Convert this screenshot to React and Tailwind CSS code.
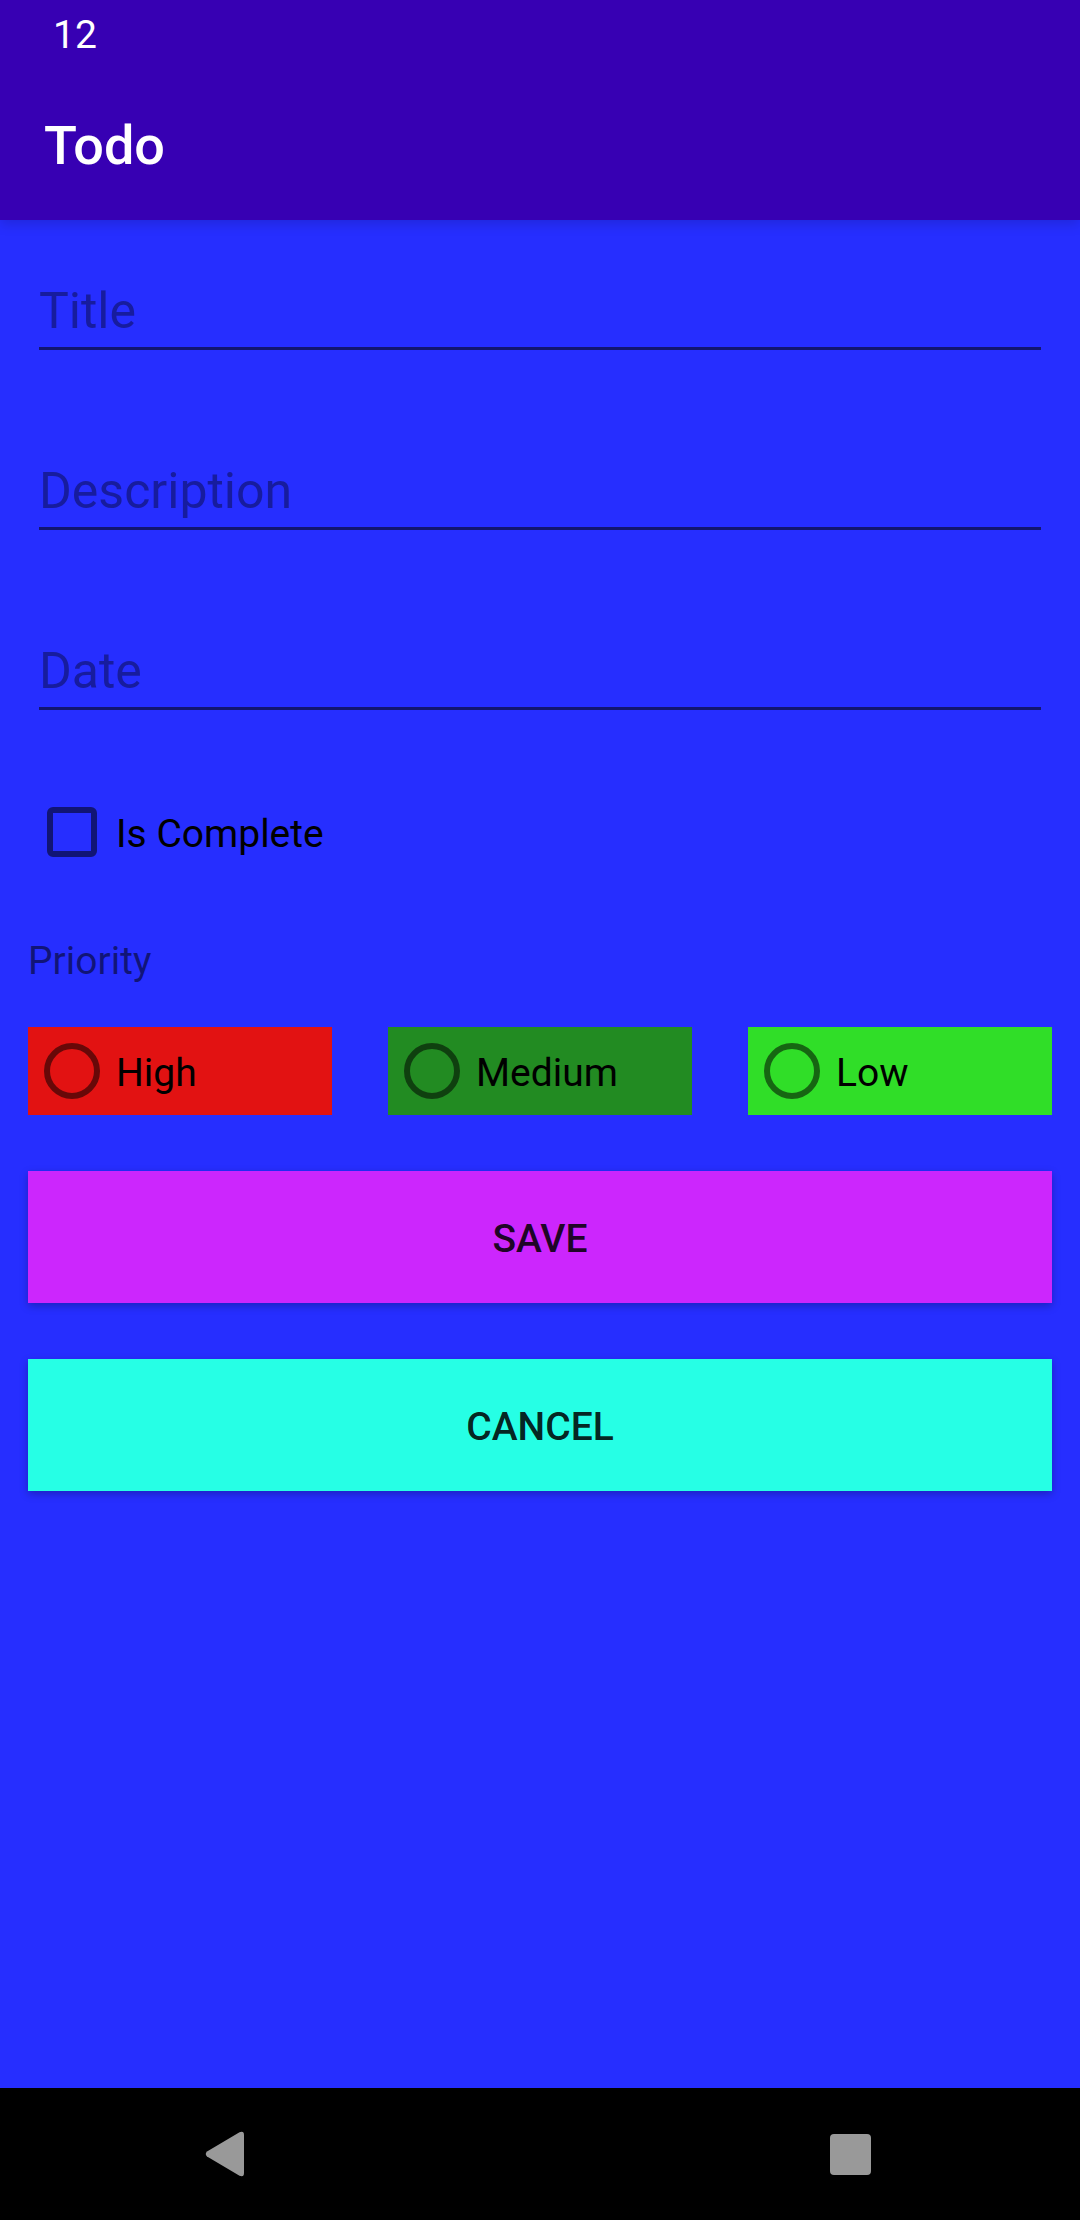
import React from "react";

const fields = [
  { id: "title", label: "Title" },
  { id: "description", label: "Description" },
  { id: "date", label: "Date" },
];

const priorities = [
  { id: "high", label: "High", color: "bg-[#e21212]" },
  { id: "medium", label: "Medium", color: "bg-[#228b22]" },
  { id: "low", label: "Low", color: "bg-[#30de28]" },
];

const actionClass =
  "h-[132px] w-full pt-1 text-[39px] leading-[46px] font-medium text-black/87 uppercase shadow-[0_3px_8px_rgba(0,0,0,0.25)]";

function Field({ id, label }) {
  return (
    <input
      id={id}
      name={id}
      type="text"
      aria-label={label}
      placeholder={label}
      className="block w-full rounded-none border-b-[3px] border-[#12166f] bg-transparent pb-1.5 text-[50px] leading-[60px] text-black outline-none placeholder:text-[#171c9e]"
    />
  );
}

function PriorityOption({ id, label, color }) {
  return (
    <div className={`flex h-[88px] items-center gap-4 pl-4 ${color}`}>
      <input
        id={id}
        type="radio"
        name="priority"
        value={id}
        className="size-[56px] shrink-0 appearance-none rounded-full border-[6px] border-black/54 checked:bg-black/54 checked:bg-clip-content checked:p-2"
      />
      <label htmlFor={id} className="flex-1 pt-1 text-[39px] leading-[46px] text-black">
        {label}
      </label>
    </div>
  );
}

export default function App() {
  return (
    <div className="flex min-h-screen flex-col bg-[#262eff] font-['Roboto',sans-serif]">
      <header className="relative bg-[#3700b3] text-white shadow-[0_4px_12px_rgba(0,0,0,0.15)]">
        <div className="flex h-[66px] items-center px-[53px] pt-1 text-[39px] leading-[46px]">12</div>
        <div className="flex h-[154px] items-center px-11 pt-1.5">
          <h1 className="text-[54px] leading-[64px] font-medium">Todo</h1>
        </div>
      </header>

      <main className="flex-1 px-7 pt-[61px]">
        <form onSubmit={(e) => e.preventDefault()}>
          <div className="flex flex-col gap-[111px] px-[11px]">
            {fields.map((f) => (
              <Field key={f.id} {...f} />
            ))}
          </div>

          <div className="mt-[78px] flex h-[88px] items-center gap-[19px] pl-[19px]">
            <input
              id="complete"
              type="checkbox"
              className="size-[50px] shrink-0 appearance-none rounded-md border-[6px] border-black/54 checked:bg-black/54"
            />
            <label htmlFor="complete" className="pt-1 text-[39px] leading-[46px] text-black">
              Is Complete
            </label>
          </div>

          <fieldset>
            <legend className="pt-[62px] pb-[43px] text-[39px] leading-[46px] text-black/54">
              Priority
            </legend>
            <div className="grid grid-cols-3 gap-14">
              {priorities.map((p) => (
                <PriorityOption key={p.id} {...p} />
              ))}
            </div>
          </fieldset>

          <div className="mt-14 flex flex-col gap-14">
            <button type="submit" className={`bg-[#cc26fd] ${actionClass}`}>
              Save
            </button>
            <button type="button" className={`bg-[#26ffe5] ${actionClass}`}>
              Cancel
            </button>
          </div>
        </form>
      </main>

      <nav className="flex h-[132px] items-center justify-between bg-black pr-[164px] pl-[159px]">
        <button type="button" aria-label="Back" className="flex size-[132px] items-center justify-center">
          <svg width="40" height="46" viewBox="0 0 40 46" fill="#999999" aria-hidden="true">
            <path d="M2 20.5 34.5 1.2Q39 -0.5 39 4V42Q39 46.5 34.5 44.8L2 25.5Q-0.5 23 2 20.5Z" />
          </svg>
        </button>
        <button type="button" aria-label="Recent apps" className="flex size-[132px] items-center justify-center">
          <span className="size-[41px] rounded-[4px] bg-[#999999]" />
        </button>
      </nav>
    </div>
  );
}
